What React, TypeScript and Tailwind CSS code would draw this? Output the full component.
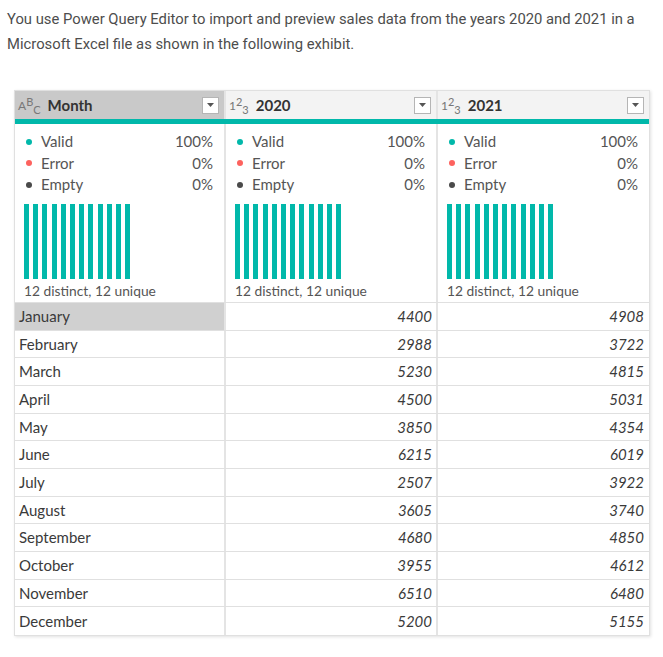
import React from "react";

// ─────────────────────────────
// Data
// ─────────────────────────────
const ROWS: [string, number, number][] = [
  ["January", 4400, 4908],
  ["February", 2988, 3722],
  ["March", 5230, 4815],
  ["April", 4500, 5031],
  ["May", 3850, 4354],
  ["June", 6215, 6019],
  ["July", 2507, 3922],
  ["August", 3605, 3740],
  ["September", 4680, 4850],
  ["October", 3955, 4612],
  ["November", 6510, 6480],
  ["December", 5200, 5155],
];

const UI_FONT = { fontFamily: "Lato, 'Open Sans', sans-serif" };

function DropButton() {
  return (
    <div className="ml-auto flex h-[17px] w-[17px] items-center justify-center border border-[#b5b5b5] bg-white">
      <svg width="7" height="4" viewBox="0 0 7 4">
        <path d="M0 0 L7 0 L3.5 4 Z" fill="#555" />
      </svg>
    </div>
  );
}

function TypeIcon({ kind }: { kind: "text" | "number" }) {
  const [a, b, c] = kind === "text" ? ["A", "B", "C"] : ["1", "2", "3"];
  return (
    <span className="mr-[7px] inline-flex h-[20px] items-center text-[12px] leading-none text-[#777]">
      <span className="mt-[1px]">{a}</span>
      <span className="mb-[7px] text-[11px]">{b}</span>
      <span className="mt-[8px] text-[11px]">{c}</span>
    </span>
  );
}

function HeaderCell({ kind, label, active }: { kind: "text" | "number"; label: string; active?: boolean }) {
  return (
    <div
      className={
        "flex h-[28px] items-center pl-[3px] pr-[5px] " +
        (active ? "bg-[#c9c9c9]" : "bg-[#f3f3f3]")
      }
    >
      <TypeIcon kind={kind} />
      <span className="text-[15px] font-bold text-[#333]">{label}</span>
      <DropButton />
    </div>
  );
}

function ProfileCell() {
  const stats = [
    ["Valid", "100%", "bg-[#01b8aa]"],
    ["Error", "0%", "bg-[#fd625e]"],
    ["Empty", "0%", "bg-[#4a4a4a]"],
  ];
  return (
    <div className="flex h-[178px] flex-col px-[8px] pt-[7px] text-[#555]">
      {stats.map(([name, pct, dot]) => (
        <div key={name} className="flex h-[21.5px] items-center text-[15px] leading-none">
          <span className={"ml-[3px] mr-[9px] h-[6px] w-[6px] rounded-full " + dot} />
          <span>{name}</span>
          <span className="ml-auto pr-[3px]">{pct}</span>
        </div>
      ))}
      <div className="mt-[8px] flex h-[75px] gap-[4.2px] pl-[1px]">
        {Array.from({ length: 12 }).map((_, i) => (
          <div key={i} className="h-full w-[5px] bg-[#01b8aa]" />
        ))}
      </div>
      <div className="mt-[5px] pl-[1px] text-[13.8px] leading-none text-[#555]">12 distinct, 12 unique</div>
    </div>
  );
}

export default function App() {
  return (
    <div className="h-[657px] w-[663px] bg-white">
      <p
        className="px-[7px] pt-[7px] text-[14.8px] leading-[25px] text-[#4d4d4d]"
        style={{ fontFamily: "Roboto, sans-serif" }}
      >
        You use Power Query Editor to import and preview sales data from the years 2020 and 2021 in a Microsoft Excel
        file as shown in the following exhibit.
      </p>

      <div
        className="mx-[14px] mt-[33px] w-[636px] border border-[#e0e0e0] shadow-[1px_1px_3px_rgba(0,0,0,0.12)]"
        style={UI_FONT}
      >
        <div className="grid grid-cols-[211px_212px_1fr]">
          <div className="border-r-2 border-[#e4e4e4]">
            <HeaderCell kind="text" label="Month" active />
          </div>
          <div className="border-r-2 border-[#e4e4e4]">
            <HeaderCell kind="number" label="2020" />
          </div>
          <div>
            <HeaderCell kind="number" label="2021" />
          </div>
        </div>
        <div className="h-[5px] bg-[#01b8aa]" />
        <div className="grid grid-cols-[211px_212px_1fr] border-b border-[#e0e0e0]">
          <div className="border-r-2 border-[#e4e4e4]">
            <ProfileCell />
          </div>
          <div className="border-r-2 border-[#e4e4e4]">
            <ProfileCell />
          </div>
          <div>
            <ProfileCell />
          </div>
        </div>
        {ROWS.map(([month, a, b], i) => (
          <div
            key={month}
            className={
              "grid h-[27.67px] grid-cols-[211px_212px_1fr] text-[15px] text-[#3a3a3a] " +
              (i < ROWS.length - 1 ? "border-b border-[#e0e0e0]" : "")
            }
          >
            <div
              className={
                "flex items-center border-r-2 border-[#e4e4e4] pl-[4px] " + (i === 0 ? "bg-[#d0d0d0]" : "")
              }
            >
              {month}
            </div>
            <div className="flex items-center justify-end border-r-2 border-[#e4e4e4] pr-[4px] italic">{a}</div>
            <div className="flex items-center justify-end pr-[5px] italic">{b}</div>
          </div>
        ))}
      </div>
    </div>
  );
}
